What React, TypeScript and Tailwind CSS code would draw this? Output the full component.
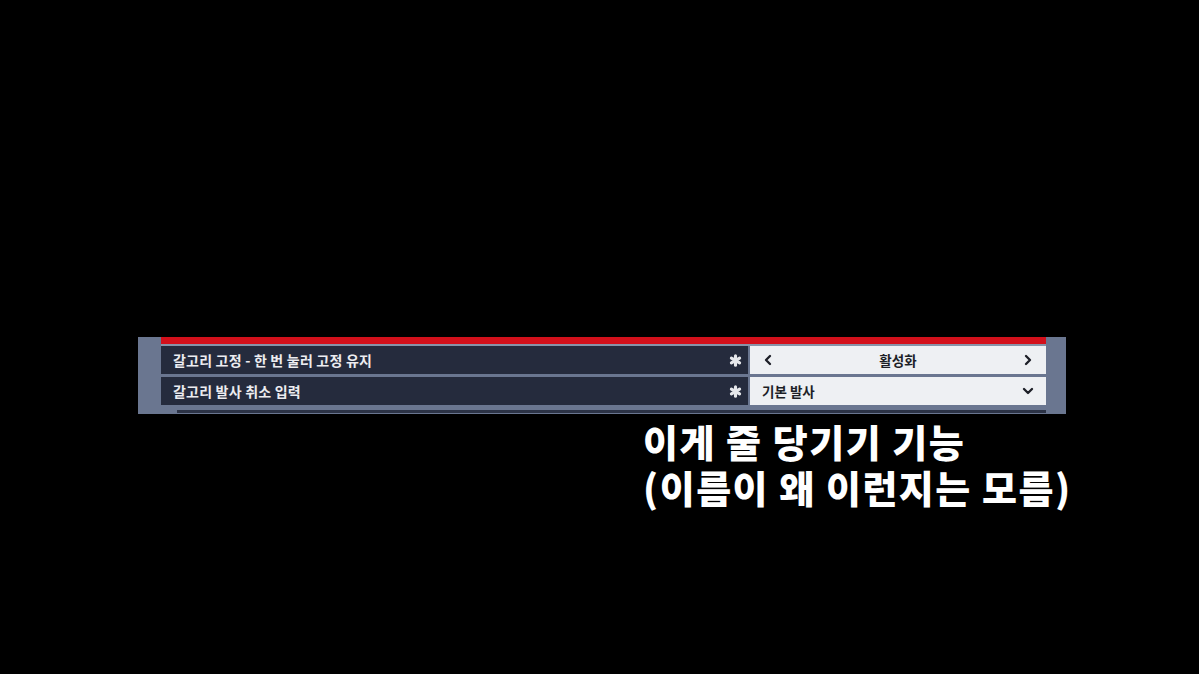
import { ChevronLeft, ChevronRight, ChevronDown } from 'lucide-react';

const font = { fontFamily: '"Noto Sans CJK KR", "Noto Sans", sans-serif' };

function Asterisk() {
  return (
    <svg width="13" height="13" viewBox="0 0 12 12" className="text-gray-200">
      <g stroke="currentColor" strokeWidth="2.8" strokeLinecap="round">
        <line x1="6" y1="1.6" x2="6" y2="10.4" />
        <line x1="2.2" y1="3.8" x2="9.8" y2="8.2" />
        <line x1="2.2" y1="8.2" x2="9.8" y2="3.8" />
      </g>
    </svg>
  );
}

function Row({ label, children }: { label: string; children: React.ReactNode }) {
  return (
    <div className="flex h-[28px] gap-[2px]">
      <div className="flex w-[587px] items-center justify-between bg-[#252b3d] pl-[12px] pr-[6px]">
        <span className="text-[14px] font-bold tracking-[0.2px] text-[#ececf0]">{label}</span>
        <Asterisk />
      </div>
      <div className="flex flex-1 items-center bg-[#eef0f3] px-[10px] text-[13.5px] font-bold text-[#1d1f27]">
        {children}
      </div>
    </div>
  );
}

export default function App() {
  return (
    <div className="h-[674px] w-[1199px] overflow-hidden bg-black pl-[138px] pt-[337px]" style={font}>
      <div className="flex h-[77px] w-[928px] bg-[#6a7690]">
        <div className="w-[23px]" />
        <div className="flex w-[885px] flex-col">
          <div className="h-[7px] bg-[#d3101b]" />
          <div className="h-[2px] bg-[#8793a8]" />
          <div className="flex flex-col gap-[3px]">
            <Row label="갈고리 고정 - 한 번 눌러 고정 유지">
              <ChevronLeft size={16} strokeWidth={3.5} />
              <span className="flex-1 text-center">활성화</span>
              <ChevronRight size={16} strokeWidth={3.5} />
            </Row>
            <Row label="갈고리 발사 취소 입력">
              <span className="flex-1 pl-[2px]">기본 발사</span>
              <ChevronDown size={16} strokeWidth={3.5} />
            </Row>
          </div>
          <div className="ml-[16px] mt-[5px] h-[3px] bg-[#2c3346]" />
        </div>
        <div className="w-[20px]" />
      </div>
      <div className="ml-[505px] mt-[4px] text-[38px] font-black leading-[46px] tracking-[1.5px] text-white">
        <div>이게 줄 당기기 기능</div>
        <div>(이름이 왜 이런지는 모름)</div>
      </div>
    </div>
  );
}
